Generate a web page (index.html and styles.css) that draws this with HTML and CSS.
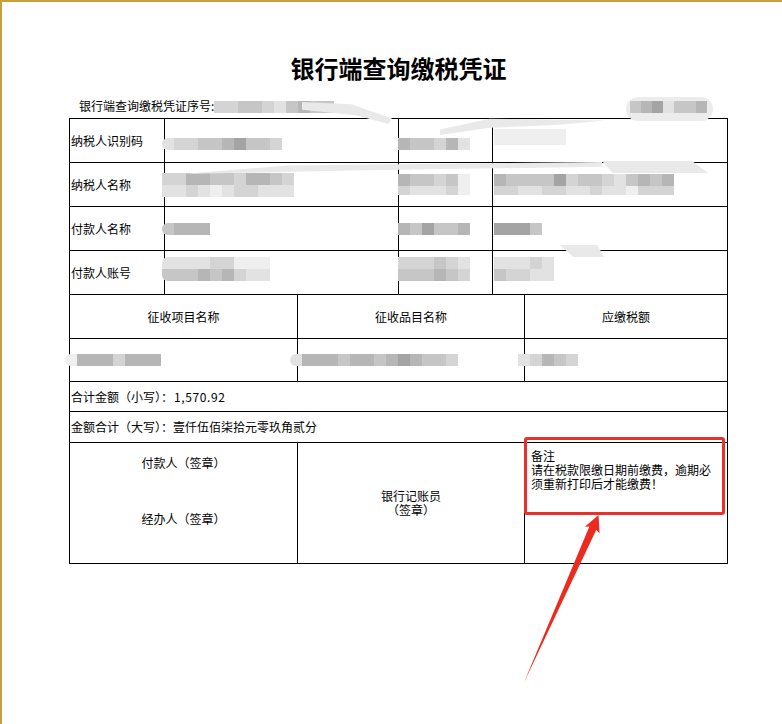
FILE: index.html
```html
<!DOCTYPE html>
<html lang="zh-CN">
<head>
<meta charset="utf-8">
<title>银行端查询缴税凭证</title>
<link rel="stylesheet" href="styles.css">
</head>
<body>
<div class="page">
  <div class="doc">
    <h1 class="title">银行端查询缴税凭证</h1>
    <div class="serial">
      <span class="serial-label">银行端查询缴税凭证序号:</span>
      <span class="mz"><i class="d"></i><i class="d"></i><i class="c"></i><i class="c"></i><i class="d"></i><i class="e"></i><i class="c"></i><i class="b"></i><i class="c"></i><i class="c"></i></span>
    </div>

    <div class="grid top">
      <div class="cell lab">纳税人识别码</div>
      <div class="cell c2"><span class="mz lo capl"><i class="e"></i><i class="d"></i><i class="d"></i><i class="c"></i><i class="c"></i><i class="b"></i><i class="a"></i><i class="c"></i><i class="c"></i><i class="d"></i></span></div>
      <div class="cell c3"><span class="mz lo"><i class="b"></i><i class="c"></i><i class="c"></i><i class="d"></i><i class="b"></i><i class="e"></i></span></div>
      <div class="cell c4"><span class="faint hi"></span></div>

      <div class="cell lab">纳税人名称</div>
      <div class="cell c2"><span class="mz2"><span class="mz"><i class="d"></i><i class="d"></i><i class="b"></i><i class="b"></i><i class="c"></i><i class="c"></i><i class="d"></i><i class="b"></i><i class="b"></i><i class="c"></i><i class="d"></i></span><span class="mz"><i class="e"></i><i class="e"></i><i class="d"></i><i class="e"></i><i class="f"></i><i class="e"></i><i class="d"></i><i class="d"></i><i class="e"></i><i class="e"></i><i class="e"></i></span></span></div>
      <div class="cell c3"><span class="mz2"><span class="mz"><i class="b"></i><i class="c"></i><i class="c"></i><i class="d"></i><i class="c"></i><i class="f"></i></span><span class="mz short"><i class="d"></i><i class="e"></i><i class="e"></i><i class="e"></i><i class="d"></i><i class="f"></i></span></span></div>
      <div class="cell c4"><span class="mz2"><span class="mz"><i class="b"></i><i class="c"></i><i class="c"></i><i class="c"></i><i class="c"></i><i class="a"></i><i class="d"></i><i class="c"></i><i class="c"></i><i class="d"></i><i class="e"></i><i class="c"></i><i class="b"></i><i class="c"></i><i class="b"></i></span><span class="mz short"><i class="d"></i><i class="d"></i><i class="e"></i><i class="e"></i><i class="d"></i><i class="d"></i><i class="e"></i><i class="e"></i><i class="d"></i><i class="e"></i><i class="e"></i><i class="f"></i><i class="d"></i><i class="d"></i><i class="d"></i></span></span></div>

      <div class="cell lab">付款人名称</div>
      <div class="cell c2"><span class="mz capl"><i class="c"></i><i class="b"></i><i class="b"></i><i class="b"></i></span></div>
      <div class="cell c3"><span class="mz"><i class="b"></i><i class="c"></i><i class="a"></i><i class="c"></i><i class="c"></i><i class="b"></i></span></div>
      <div class="cell c4"><span class="mz"><i class="a"></i><i class="a"></i><i class="a"></i><i class="c"></i></span></div>

      <div class="cell lab">付款人账号</div>
      <div class="cell c2"><span class="mz2 up capl"><span class="mz"><i class="e"></i><i class="e"></i><i class="e"></i><i class="e"></i><i class="d"></i><i class="d"></i><i class="f"></i><i class="f"></i><i class="f"></i></span><span class="mz"><i class="c"></i><i class="c"></i><i class="c"></i><i class="b"></i><i class="c"></i><i class="b"></i><i class="d"></i><i class="e"></i><i class="e"></i></span></span></div>
      <div class="cell c3"><span class="mz2 up"><span class="mz"><i class="d"></i><i class="d"></i><i class="d"></i><i class="c"></i><i class="d"></i><i class="e"></i></span><span class="mz"><i class="c"></i><i class="c"></i><i class="c"></i><i class="b"></i><i class="c"></i><i class="d"></i></span></span></div>
      <div class="cell c4"><span class="mz2 up"><span class="mz"><i class="e"></i><i class="e"></i><i class="e"></i><i class="d"></i><i class="e"></i></span><span class="mz"><i class="c"></i><i class="d"></i><i class="d"></i><i class="e"></i><i class="e"></i></span></span></div>
    </div>

    <div class="grid bottom">
      <div class="cell head">征收项目名称</div>
      <div class="cell head">征收品目名称</div>
      <div class="cell head">应缴税额</div>

      <div class="cell d1"><span class="mz capl"><i class="f"></i><i class="b"></i><i class="b"></i><i class="b"></i><i class="d"></i><i class="b"></i><i class="b"></i><i class="b"></i></span></div>
      <div class="cell d2"><span class="mz capl"><i class="e"></i><i class="b"></i><i class="b"></i><i class="b"></i><i class="c"></i><i class="b"></i><i class="b"></i><i class="c"></i><i class="b"></i><i class="a"></i><i class="b"></i><i class="c"></i><i class="c"></i><i class="d"></i></span></div>
      <div class="cell d3"><span class="mz"><i class="e"></i><i class="d"></i><i class="b"></i><i class="c"></i><i class="d"></i></span></div>

      <div class="cell full">合计金额（小写）：<span class="num">1,570.92</span></div>
      <div class="cell full">金额合计（大写）：壹仟伍佰柒拾元零玖角贰分</div>

      <div class="cell sign">
        <span>付款人（签章）</span>
        <span>经办人（签章）</span>
      </div>
      <div class="cell clerk">
        <span>银行记账员</span>
        <span>（签章）</span>
      </div>
      <div class="cell remark">备注<br>请在税款限缴日期前缴费，逾期必须重新打印后才能缴费！</div>
    </div>
  </div>

  <span class="pill"><i class="c"></i><i class="b"></i><i class="a"></i><i class="e"></i><i class="c"></i><i class="c"></i><i class="b"></i></span>
  <span class="smear s1"></span>
  <span class="smear s2"></span>
  <span class="smear s3"></span>
  <span class="smear s4"></span>
  <span class="smear s5"></span>

  <div class="callout"></div>
  <svg class="arrow" width="782" height="724" viewBox="0 0 782 724" aria-hidden="true">
    <polygon points="598.5,515 599.6,533.6 596.3,529.8 524,682.5 589.4,526.4 584.8,526.8" fill="#ee2a1f"/>
  </svg>
</div>
</body>
</html>
```

FILE: styles.css
```css
* { box-sizing: border-box; }

body {
  margin: 0;
  background: #fff;
  font-family: "Noto Sans CJK SC", "Noto Sans", sans-serif;
  color: #000;
}

.page {
  position: relative;
  width: 782px;
  height: 724px;
  border-top: 2px solid #c6a03a;
  border-left: 2px solid #c6a03a;
  background: #fff;
  overflow: hidden;
}

.doc {
  margin-left: 67px;
  width: 659px;
  padding-top: 51px;
}

.title {
  margin: 0;
  height: 30px;
  line-height: 30px;
  font-size: 24px;
  font-weight: 700;
  text-align: center;
}

.serial {
  display: flex;
  align-items: center;
  height: 16px;
  margin: 15px 0 4px;
  padding-left: 10px;
  font-size: 12px;
  line-height: 16px;
}

.serial .mz { margin-top: 1px; }

/* tables */
.grid {
  display: grid;
  border-left: 1px solid #000;
}

.grid.top {
  border-top: 1px solid #000;
  grid-template-columns: 95px 234px 94px 235px;
  grid-auto-rows: 44px;
}

.grid.bottom {
  grid-template-columns: 228px 227px 203px;
  grid-template-rows: 44px 43px 30px 31px 121px;
}

.cell {
  display: flex;
  align-items: center;
  border-right: 1px solid #000;
  border-bottom: 1px solid #000;
  font-size: 12px;
  line-height: 14px;
  white-space: nowrap;
}

.lab { padding-left: 1px; }
.c2 > span { margin-left: -3px; }
.c3 > span { margin-left: -1px; }
.c4 > span { margin-left: 1px; }

.head { justify-content: center; }

.d1 > span { margin-left: -5px; }
.d2 > span { margin-left: -8px; }
.d3 > span { margin-left: -7px; }

.full {
  grid-column: 1 / -1;
  padding-left: 1px;
}

.num {
  letter-spacing: 0.6px;
  padding-left: 1px;
}

.sign {
  flex-direction: column;
  align-items: center;
  justify-content: flex-start;
  padding-top: 13px;
  gap: 42px;
}

.clerk {
  flex-direction: column;
  align-items: center;
  justify-content: center;
}

.remark {
  display: block;
  padding: 6px 5px 0 6px;
  white-space: normal;
  line-height: 14px;
  color: #000;
}

/* mosaics (redacted values) */
.mz { display: flex; }
.mz i { display: block; width: 12px; height: 12px; }
.mz2 { display: flex; flex-direction: column; }
.mz2 .short i { height: 9px; }
.lo { margin-top: 6px; }
.up { margin-bottom: 7px; }
.capl { border-radius: 6px 0 0 6px; overflow: hidden; }

.faint {
  display: block;
  width: 72px;
  height: 16px;
  background: #efefef;
}
.hi { margin-bottom: 8px; }

.a { background: #a4a4a4; }
.b { background: #b6b6b6; }
.c { background: #c6c6c6; }
.d { background: #d4d4d4; }
.e { background: #e2e2e2; }
.f { background: #efefef; }

/* overlays */
.pill {
  position: absolute;
  left: 624px;
  top: 95px;
  width: 87px;
  height: 24px;
  padding: 4px 0 0 4px;
  display: flex;
  border-radius: 12px;
  background: #ececec;
}
.pill i { display: block; width: 11px; height: 12px; }

.smear {
  position: absolute;
  background: #e9e9e9;
}
.s1 {
  left: 300px; top: 100px; width: 90px; height: 22px;
  clip-path: polygon(0 0, 55% 10%, 100% 75%, 96% 100%, 60% 60%, 0 35%);
}
.s2 {
  left: 438px; top: 115px; width: 165px; height: 18px;
  clip-path: polygon(0 70%, 30% 10%, 100% 20%, 70% 45%, 30% 60%, 0 100%);
}
.s3 {
  left: 180px; top: 160px; width: 420px; height: 12px;
  clip-path: polygon(0 100%, 25% 30%, 100% 0, 100% 40%, 40% 70%, 0 100%);
}
.s4 {
  left: 600px; top: 159px; width: 106px; height: 12px;
  clip-path: polygon(0 0, 85% 0, 100% 100%, 10% 100%);
}
.s5 {
  left: 558px; top: 243px; width: 44px; height: 12px;
  clip-path: polygon(0 0, 85% 0, 100% 100%, 30% 100%);
}

.callout {
  position: absolute;
  left: 522px;
  top: 435px;
  width: 201px;
  height: 78px;
  border: 3px solid #e8312a;
  border-radius: 3px;
}

.arrow {
  position: absolute;
  left: -2px;
  top: -2px;
}
```
